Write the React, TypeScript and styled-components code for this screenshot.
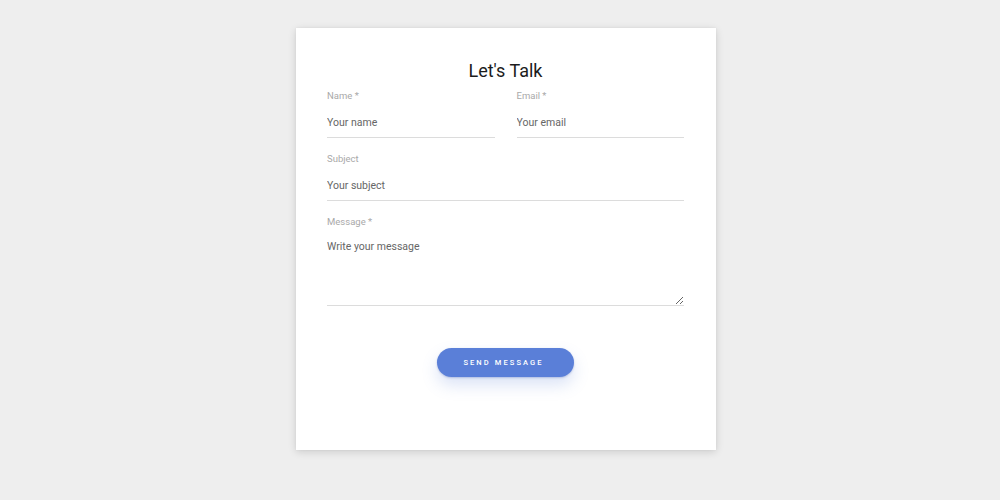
import * as React from 'react'
import styled, { createGlobalStyle } from 'styled-components'

const GlobalStyle = createGlobalStyle`
  html, body {
    margin: 0;
    padding: 0;
    background: #eeeeee;
    font-family: Roboto, 'Liberation Sans', sans-serif;
  }
`

const Page = styled.main`
  width: 1000px;
  height: 500px;
  display: flex;
  justify-content: center;
  align-items: flex-start;
  padding: 28px 0 0 12px;
  box-sizing: border-box;
`

const Card = styled.form`
  width: 420px;
  height: 422px;
  box-sizing: border-box;
  background: #ffffff;
  padding: 32px 32px 0 31px;
  box-shadow: 0 2px 8px rgba(0, 0, 0, 0.14), 0 0 2px rgba(0, 0, 0, 0.06);
  display: flex;
  flex-direction: column;
  gap: 15px;
`

const Title = styled.h1`
  margin: 0 0 -7px;
  font-size: 18px;
  line-height: 22px;
  font-weight: 400;
  color: #1c1c1c;
  text-align: center;
`

const Row = styled.div`
  display: grid;
  grid-template-columns: 1fr 1fr;
  column-gap: 22px;
`

const Field = styled.label`
  display: flex;
  flex-direction: column;
`

const Label = styled.span`
  font-size: 9.5px;
  line-height: 12px;
  color: #a9a9a9;
  margin-bottom: 6px;
`

const Input = styled.input`
  height: 30px;
  box-sizing: border-box;
  border: 0;
  border-bottom: 1px solid #dcdcdc;
  padding: 0;
  font-family: inherit;
  font-size: 10.5px;
  color: #444;
  outline: none;
  background: transparent;

  &::placeholder {
    color: #666666;
  }
`

const TextArea = styled.textarea`
  height: 72px;
  box-sizing: border-box;
  border: 0;
  border-bottom: 1px solid #dcdcdc;
  padding: 5px 0 0;
  font-family: inherit;
  font-size: 10.5px;
  line-height: 16px;
  color: #444;
  outline: none;
  background: transparent;
  resize: vertical;

  &::placeholder {
    color: #666666;
  }
`

const Actions = styled.div`
  display: flex;
  justify-content: center;
  margin-top: 27px;
`

const SendButton = styled.button`
  width: 137px;
  height: 29px;
  border: 0;
  border-radius: 15px;
  background: #5a7fd8;
  color: #ffffff;
  font-family: inherit;
  font-size: 7.5px;
  font-weight: 500;
  letter-spacing: 2.1px;
  padding-left: 2px;
  box-shadow: 0 8px 16px rgba(90, 127, 216, 0.22), 0 1px 2px rgba(60, 90, 170, 0.3);
  cursor: pointer;
`

const App = () => (
  <Page>
    <GlobalStyle />
    <Card onSubmit={ (e) => e.preventDefault() }>
      <Title>Let's Talk</Title>
      <Row>
        <Field>
          <Label>Name *</Label>
          <Input placeholder="Your name" />
        </Field>
        <Field>
          <Label>Email *</Label>
          <Input placeholder="Your email" />
        </Field>
      </Row>
      <Field>
        <Label>Subject</Label>
        <Input placeholder="Your subject" />
      </Field>
      <Field>
        <Label>Message *</Label>
        <TextArea placeholder="Write your message" />
      </Field>
      <Actions>
        <SendButton type="submit">SEND MESSAGE</SendButton>
      </Actions>
    </Card>
  </Page>
)

export default App
